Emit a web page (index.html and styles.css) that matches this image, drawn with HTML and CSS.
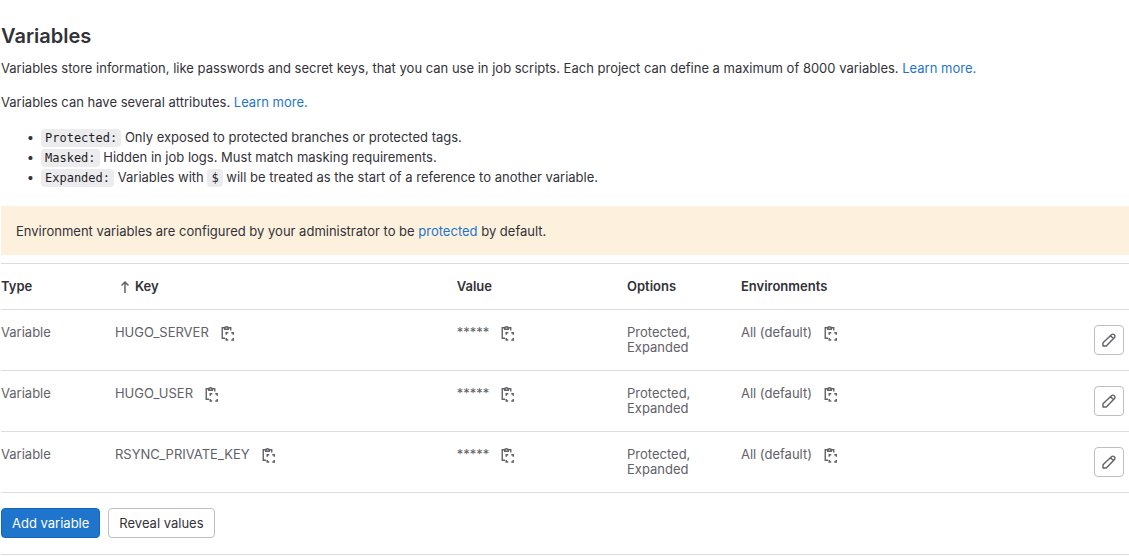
FILE: index.html
```
<!DOCTYPE html>
<html lang="en">
<head>
<meta charset="utf-8">
<title>Variables</title>
<link rel="stylesheet" href="styles.css">
</head>
<body>
<svg class="sprite" aria-hidden="true">
  <symbol id="copy" viewBox="0 0 16 16">
    <path d="M4.500 2.750H2.250v10.500H5M8.500 2.750h2.250V5.500M4.750 4.250V2.500H5.300a1.300 1.300 0 0 1 2.400 0h.55v1.750z" fill="none" stroke="currentColor" stroke-width="1.400"/>
    <path d="M6.250 9.750v-2h2M11.250 7.750h2v2M13.250 13v2h-2M8.250 15h-2v-2" fill="none" stroke="currentColor" stroke-width="1.500"/>
  </symbol>
  <symbol id="pencil" viewBox="0 0 16 16">
    <path d="M2 14v-3.300l8.700-8.100a1.600 1.600 0 0 1 2.300 0l.5.500a1.600 1.600 0 0 1 0 2.300L5.300 14zM9.500 3.700l2.900 2.900" fill="none" stroke="currentColor" stroke-width="1.400" stroke-linejoin="round"/>
  </symbol>
</svg>
<main class="page">
  <h1 class="title">Variables</h1>
  <p class="text">Variables store information, like passwords and secret keys, that you can use in job scripts. Each project can define a maximum of 8000 variables. <a href="#">Learn more.</a></p>
  <p class="text">Variables can have several attributes. <a href="#">Learn more.</a></p>
  <ul class="attributes">
    <li><code>Protected:</code> Only exposed to protected branches or protected tags.</li>
    <li><code>Masked:</code> Hidden in job logs. Must match masking requirements.</li>
    <li><code>Expanded:</code> Variables with <code>$</code> will be treated as the start of a reference to another variable.</li>
  </ul>
  <div class="notice">Environment variables are configured by your administrator to be <a href="#">protected</a> by default.</div>
  <table class="variables">
    <colgroup><col class="col-type"><col class="col-key"><col class="col-value"><col class="col-options"><col class="col-env"><col></colgroup>
    <thead>
      <tr>
        <th>Type</th>
        <th><span class="sorted"><svg class="arrow" viewBox="0 0 10 14" aria-hidden="true"><path d="M5 13V2M1.500 5.500 5 2l3.500 3.500" fill="none" stroke="currentColor" stroke-width="1.500"/></svg>Key</span></th>
        <th>Value</th><th>Options</th><th>Environments</th><th></th>
      </tr>
    </thead>
    <tbody>
      <tr>
        <td>Variable</td>
        <td><div class="copyable">HUGO_SERVER<button class="copy" aria-label="Copy key"><svg><use href="#copy"/></svg></button></div></td>
        <td><div class="copyable">*****<button class="copy" aria-label="Copy value"><svg><use href="#copy"/></svg></button></div></td>
        <td>Protected, Expanded</td>
        <td><div class="copyable">All (default)<button class="copy" aria-label="Copy environment"><svg><use href="#copy"/></svg></button></div></td>
        <td class="actions"><button class="edit" aria-label="Edit"><svg><use href="#pencil"/></svg></button></td>
      </tr>
      <tr>
        <td>Variable</td>
        <td><div class="copyable">HUGO_USER<button class="copy" aria-label="Copy key"><svg><use href="#copy"/></svg></button></div></td>
        <td><div class="copyable">*****<button class="copy" aria-label="Copy value"><svg><use href="#copy"/></svg></button></div></td>
        <td>Protected, Expanded</td>
        <td><div class="copyable">All (default)<button class="copy" aria-label="Copy environment"><svg><use href="#copy"/></svg></button></div></td>
        <td class="actions"><button class="edit" aria-label="Edit"><svg><use href="#pencil"/></svg></button></td>
      </tr>
      <tr>
        <td>Variable</td>
        <td><div class="copyable">RSYNC_PRIVATE_KEY<button class="copy" aria-label="Copy key"><svg><use href="#copy"/></svg></button></div></td>
        <td><div class="copyable">*****<button class="copy" aria-label="Copy value"><svg><use href="#copy"/></svg></button></div></td>
        <td>Protected, Expanded</td>
        <td><div class="copyable">All (default)<button class="copy" aria-label="Copy environment"><svg><use href="#copy"/></svg></button></div></td>
        <td class="actions"><button class="edit" aria-label="Edit"><svg><use href="#pencil"/></svg></button></td>
      </tr>
    </tbody>
  </table>
  <div class="buttons">
    <button class="btn btn-primary">Add variable</button>
    <button class="btn">Reveal values</button>
  </div>
</main>
</body>
</html>
```
FILE: styles.css
```
* { box-sizing: border-box; }
body {
  margin: 0;
  background: #fff;
  color: #333238;
  font: 13px/20px Inter, sans-serif;
}
a { color: #1f75cb; text-decoration: none; }
button { font: inherit; cursor: pointer; }
.sprite { position: absolute; width: 0; height: 0; }
.page { padding: 24px 0 0 1px; }
.title { margin: 0 0 10px; font-size: 20px; line-height: 24px; font-weight: 600; }
.text { margin: 0 0 14px; }
.attributes { margin: 0 0 19px; padding: 1px 0 0 40px; }
.attributes li::marker { content: "•\00a0\00a0"; }
code {
  padding: 2px 4px;
  border-radius: 4px;
  background: #ececef;
  color: #1f1e24;
  font: 12px/16px "DejaVu Sans Mono", monospace;
}
.notice { padding: 15px 15px 14px; background: #fdf1dd; }
.variables {
  width: 100%;
  margin-top: 8px;
  border-collapse: separate;
  border-spacing: 0;
  table-layout: fixed;
  border-top: 1px solid #dcdcde;
}
.col-type, .col-options { width: 10.1%; }
.col-key { width: 30.3%; }
.col-value { width: 15.1%; }
.col-env { width: 30.2%; }
th, td {
  padding: 15px 0;
  border-bottom: 1px solid #dcdcde;
  line-height: 15px;
  text-align: left;
  vertical-align: top;
}
th { font-weight: 600; }
td { color: #626168; }
td:nth-child(4) { padding-right: 40px; }
.sorted { display: flex; align-items: center; gap: 5px; padding-left: 5px; }
.arrow { width: 10px; height: 14px; color: #626168; }
.copyable { display: flex; align-items: center; height: 15px; gap: 11px; }
.copy { display: flex; padding: 0; border: 0; background: none; color: #626168; }
.copy svg, .edit svg { width: 16px; height: 16px; }
td.actions { padding-right: 5px; }
.edit {
  display: flex;
  align-items: center;
  justify-content: center;
  width: 30px;
  height: 30px;
  margin-left: auto;
  padding: 0;
  border: 1px solid #bfbfc3;
  border-radius: 4px;
  background: #fff;
  color: #626168;
}
.buttons { display: flex; gap: 8px; padding: 15px 0 16px; border-bottom: 1px solid #dcdcde; }
.btn {
  height: 30px;
  padding: 0 10px;
  border: 1px solid #bfbfc3;
  border-radius: 4px;
  background: #fff;
  color: #333238;
}
.btn-primary { border-color: #1068bf; background: #1f75cb; color: #fff; }
```
